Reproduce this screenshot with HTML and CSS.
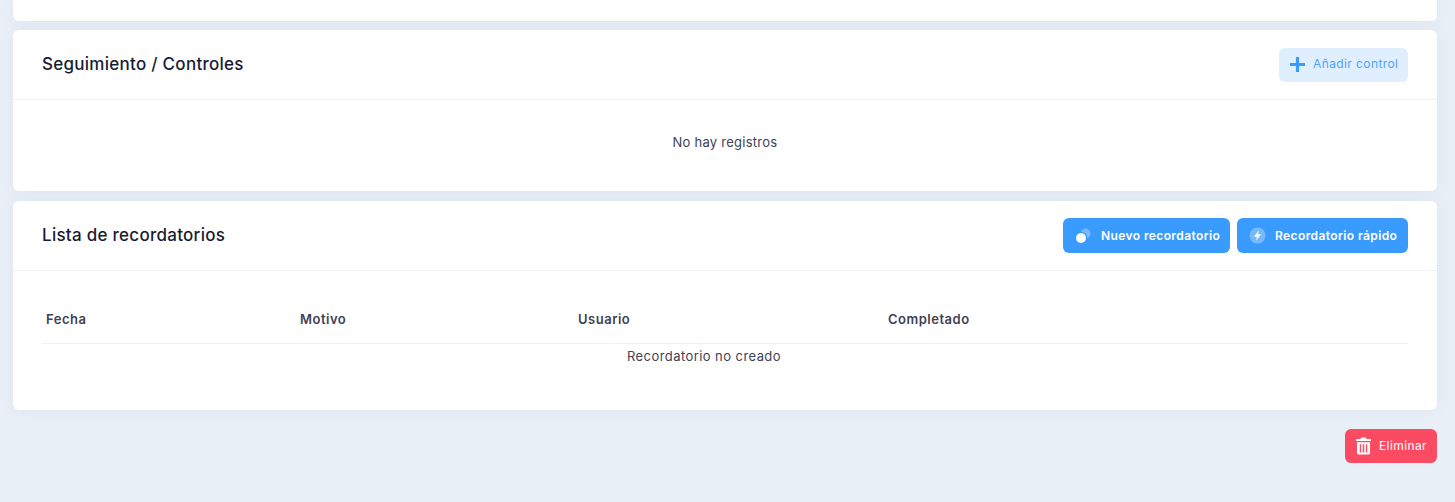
FILE: index.html
```html
<!DOCTYPE html>
<html lang="es">
<head>
<meta charset="utf-8">
<title>Seguimiento</title>
<link rel="stylesheet" href="styles.css">
</head>
<body>
<main class="page">
  <div class="card card-cut"></div>

  <section class="card">
    <header class="card-head">
      <h2 class="card-title">Seguimiento / Controles</h2>
      <button class="btn btn-light" type="button">
        <svg class="icon-plus" viewBox="0 0 16 16" aria-hidden="true"><path d="M8 0v16M0 8h16" fill="none" stroke="currentColor" stroke-width="3.4"/></svg>
        <span class="btn-label">Añadir control</span>
      </button>
    </header>
    <div class="empty-body"><p class="muted">No hay registros</p></div>
  </section>

  <section class="card">
    <header class="card-head">
      <h2 class="card-title">Lista de recordatorios</h2>
      <div class="actions">
        <button class="btn btn-primary btn-new" type="button">
          <svg class="icon-dots" viewBox="0 0 17 17" aria-hidden="true">
            <circle cx="10.500" cy="6.500" r="5" fill="#fff" opacity=".3"/>
            <circle cx="6" cy="11" r="6.200" fill="#3a9bff"/>
            <circle cx="6" cy="11" r="5" fill="#fff"/>
          </svg>
          <span>Nuevo recordatorio</span>
        </button>
        <button class="btn btn-primary btn-quick" type="button">
          <svg class="icon-bolt" viewBox="0 0 18 18" aria-hidden="true">
            <circle cx="9" cy="9" r="8.500" fill="#fff" opacity=".3"/>
            <path d="M10.600 3.500 5.200 10.200h3.200l-.9 4.300 5.300-6.700H9.500z" fill="#fff"/>
          </svg>
          <span>Recordatorio rápido</span>
        </button>
      </div>
    </header>
    <div class="table-body">
      <table class="table">
        <thead>
          <tr><th class="c1">Fecha</th><th class="c2">Motivo</th><th class="c3">Usuario</th><th>Completado</th></tr>
        </thead>
        <tbody>
          <tr><td colspan="4">Recordatorio no creado</td></tr>
        </tbody>
      </table>
    </div>
  </section>

  <div class="footer-actions">
    <button class="btn btn-danger" type="button">
      <svg class="icon-trash" viewBox="0 0 16 18" aria-hidden="true">
        <path fill="#fff" fill-rule="evenodd" d="M5.500 0h5l.7 1.600H16v2H0v-2h4.800zM1 5h14v11.500a1.500 1.500 0 0 1-1.500 1.500h-11A1.500 1.500 0 0 1 1 16.500zm3 2v9h1.500V7zm3.200 0v9h1.600V7zm3.300 0v9H12V7z"/>
      </svg>
      <span class="btn-label">Eliminar</span>
    </button>
  </div>
</main>
</body>
</html>
```
FILE: styles.css
```css
* { box-sizing: border-box; }
html, body { margin: 0; padding: 0; }
body {
  background: #e9eff7;
  font-family: Inter, "Noto Sans", sans-serif;
  color: #3f4254;
  font-size: 13px;
  height: 502px;
  overflow: hidden;
}
.page {
  display: flex;
  flex-direction: column;
  gap: 10px;
  padding: 0 18px 0 13px;
}
.card {
  background: #fff;
  border-radius: 6px;
  box-shadow: 0 0 16px rgba(76, 87, 125, .06);
}
.card-cut {
  height: 21px;
  margin-bottom: -1px;
  border-radius: 0 0 6px 6px;
}
.card-head {
  height: 70px;
  padding: 0 29px;
  display: flex;
  align-items: center;
  justify-content: space-between;
  border-bottom: 1px solid #eff2f5;
}
.card-title {
  margin: 0 0 1px;
  font-size: 17px;
  font-weight: 500;
  letter-spacing: .27px;
  color: #181c32;
}
.empty-body {
  height: 91px;
  display: flex;
  align-items: center;
  justify-content: center;
}
.muted { margin: 0 0 8px; font-size: 13px; letter-spacing: .25px; }
.actions { display: flex; gap: 7px; }
.btn {
  display: inline-flex;
  align-items: center;
  height: 34px;
  border: 0;
  border-radius: 6px;
  font-family: inherit;
  font-size: 12px;
  letter-spacing: .4px;
  padding: 0;
}
.btn-label { padding-bottom: 2px; }
.btn-light {
  width: 129px;
  padding-left: 11px;
  background: #dfefff;
  color: #4da3ff;
}
.btn-primary {
  height: 35px;
  background: #3a9bff;
  color: #fff;
  font-weight: 600;
}
.btn-new { width: 167px; padding-left: 12px; }
.btn-quick { width: 171px; padding-left: 12px; }
.btn-danger {
  width: 92px;
  padding-left: 11px;
  background: #fb4b63;
  color: #fff;
}
.icon-plus { width: 15px; height: 15px; margin-right: 8px; margin-bottom: 1px; color: #3a9bff; }
.icon-dots { width: 17px; height: 17px; margin-right: 9px; }
.icon-bolt { width: 17px; height: 17px; margin-right: 9px; }
.icon-trash { width: 15px; height: 18px; margin-right: 8px; }
.table-body { padding: 36px 29px 41px; }
.table { width: 100%; border-collapse: collapse; font-size: 13px; }
.table th {
  height: 36px;
  padding: 0 4px 11px;
  text-align: left;
  font-weight: 600;
  font-size: 13px;
  letter-spacing: .5px;
  border-bottom: 1px solid #eff2f5;
}
.table th.c1 { width: 254px; }
.table th.c2 { width: 278px; }
.table th.c3 { width: 310px; }
.table td { height: 26px; text-align: center; padding: 0 42px 0 0; letter-spacing: .43px; }
.footer-actions {
  display: flex;
  justify-content: flex-end;
  margin-top: 9px;
}
```
